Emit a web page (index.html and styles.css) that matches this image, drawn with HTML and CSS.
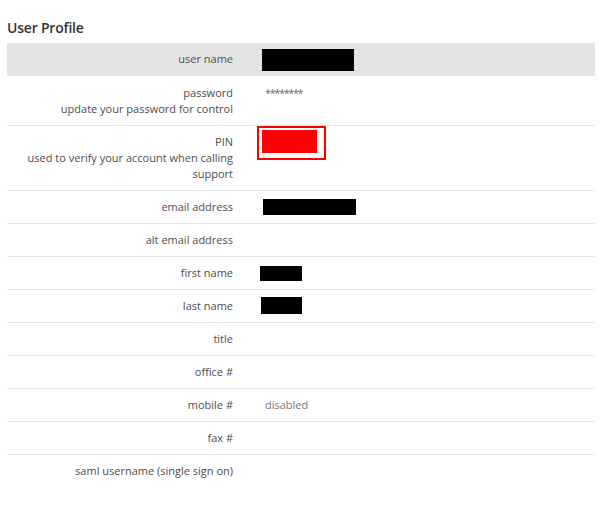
FILE: index.html
```html
<!DOCTYPE html>
<html lang="en">
<head>
<meta charset="utf-8">
<title>User Profile</title>
<link rel="stylesheet" href="styles.css">
</head>
<body>
<div class="page">
  <h1 class="title">User Profile</h1>
  <div class="profile">
    <div class="row row-active">
      <div class="label">user name</div>
      <div class="value"><span class="redact redact-user"></span></div>
    </div>
    <div class="row">
      <div class="label">password<br>update your password for control</div>
      <div class="value"><span class="stars">********</span></div>
    </div>
    <div class="row">
      <div class="label">PIN<br>used to verify your account when calling support</div>
      <div class="value"><div class="pin"><div class="pin-fill"></div></div></div>
    </div>
    <div class="row">
      <div class="label">email address</div>
      <div class="value"><span class="redact redact-email"></span></div>
    </div>
    <div class="row">
      <div class="label">alt email address</div>
      <div class="value"></div>
    </div>
    <div class="row">
      <div class="label">first name</div>
      <div class="value"><span class="redact redact-first"></span></div>
    </div>
    <div class="row">
      <div class="label">last name</div>
      <div class="value"><span class="redact redact-last"></span></div>
    </div>
    <div class="row">
      <div class="label">title</div>
      <div class="value"></div>
    </div>
    <div class="row">
      <div class="label">office #</div>
      <div class="value"></div>
    </div>
    <div class="row">
      <div class="label">mobile #</div>
      <div class="value"><span class="text">disabled</span></div>
    </div>
    <div class="row">
      <div class="label">fax #</div>
      <div class="value"></div>
    </div>
    <div class="row row-last">
      <div class="label">saml username (single sign on)</div>
      <div class="value"></div>
    </div>
  </div>
</div>
</body>
</html>
```
FILE: styles.css
```css
html, body {
  margin: 0;
  padding: 0;
  background: #fff;
}
body {
  font-family: "Open Sans", "Liberation Sans", sans-serif;
  font-size: 11px;
  line-height: 16px;
  color: #4d4d4d;
}
.page {
  padding: 19px 5px 0 7px;
}
.title {
  margin: 0 0 6px 0;
  font-size: 14px;
  line-height: 18px;
  font-weight: 600;
  color: #333;
  letter-spacing: -0.2px;
}
.profile {
  display: flex;
  flex-direction: column;
}
.row {
  display: grid;
  grid-template-columns: 226px 1fr;
  border-bottom: 1px solid #e6e6e6;
}
.row-active {
  background: #e4e4e4;
  border-bottom-color: #e4e4e4;
  margin-bottom: 1px;
}
.row-last {
  border-bottom: none;
}
.label {
  padding: 8px 0 8px 8px;
  text-align: right;
  color: #4d4d4d;
}
.value {
  padding: 8px 0 8px 24px;
  color: #777;
  display: flex;
  flex-direction: column;
  align-items: flex-start;
}
.text {
  padding-left: 8px;
}
.stars {
  padding-left: 8px;
  letter-spacing: -1.4px;
  color: #6a707a;
}
.redact {
  display: block;
  background: #000;
}
.redact-user {
  width: 92px;
  height: 22px;
  margin: -2px 0 -4px 5px;
}
.redact-email {
  width: 93px;
  height: 16px;
  margin-left: 6px;
}
.redact-first {
  width: 42px;
  height: 15px;
  margin: 1px 0 0 3px;
}
.redact-last {
  width: 41px;
  height: 17px;
  margin: -1px 0 0 4px;
}
.pin {
  margin-top: -8px;
  border: 2px solid #f00;
  padding: 2px 7px 5px 3px;
}
.pin-fill {
  width: 55px;
  height: 23px;
  background: #f00;
}
```
